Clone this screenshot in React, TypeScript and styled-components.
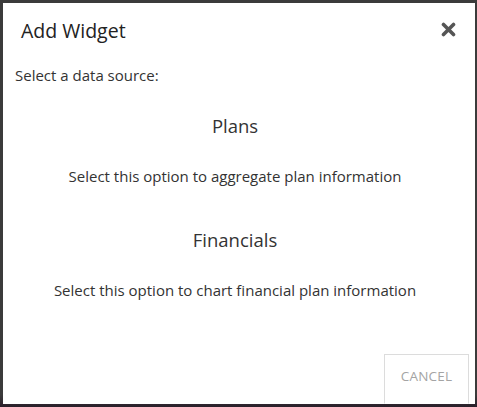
import React from 'react';
import styled, { createGlobalStyle } from 'styled-components';

const GlobalStyle = createGlobalStyle`
  html, body {
    margin: 0;
    padding: 0;
    background: #3b3b3b;
  }
  body {
    font-family: 'Open Sans', 'Noto Sans', sans-serif;
    color: #333;
  }
`;

const Backdrop = styled.div`
  width: 477px;
  height: 407px;
  padding: 3px 2px 3px 3px;
  box-sizing: border-box;
  background: linear-gradient(to bottom, #3b3b3b 0%, #3b3b3b 97%, #2a1f2a 100%);
`;

const Dialog = styled.div`
  width: 472px;
  height: 401px;
  background: #fff;
  display: flex;
  flex-direction: column;
  overflow: hidden;
`;

const Header = styled.div`
  display: flex;
  align-items: center;
  justify-content: space-between;
  padding: 12px 18px 0 18px;
  height: 30px;
`;

const Title = styled.h4`
  margin: 0;
  font-size: 19.5px;
  font-weight: 400;
  color: #222;
`;

const CloseButton = styled.button`
  border: 0;
  background: none;
  padding: 0;
  margin: 0 1px 2px 0;
  display: flex;
  cursor: pointer;
`;

const Body = styled.div`
  flex: 1;
  padding: 20px 20px 0 12px;
  font-size: 15px;
  line-height: 20px;
`;

const Prompt = styled.p`
  margin: 0 0 28px 0;
`;

const Option = styled.div`
  text-align: center;
  cursor: pointer;
  margin-bottom: 41px;
`;

const OptionTitle = styled.div`
  font-size: 18.5px;
  line-height: 25px;
  color: #333;
  margin-bottom: 28px;
`;

const OptionText = styled.div`
  font-size: 15px;
`;

const Footer = styled.div`
  display: flex;
  justify-content: flex-end;
  padding-right: 6px;
`;

const CancelButton = styled.button`
  width: 85px;
  height: 50px;
  padding: 0 0 6px 0;
  border: 1px solid #dcdcdc;
  border-bottom-color: transparent;
  background: #fff;
  color: #a4a4a4;
  font-family: inherit;
  font-size: 13.5px;
  letter-spacing: 0.2px;
  text-transform: uppercase;
  cursor: pointer;
`;

const CloseIcon = () => (
  <svg width="15" height="15" viewBox="0 0 15 15">
    <path
      d="M2.5 2.5 L12.5 12.5 M12.5 2.5 L2.5 12.5"
      stroke="#555"
      strokeWidth="3.6"
      strokeLinecap="round"
    />
  </svg>
);

const options = [
  { title: 'Plans', text: 'Select this option to aggregate plan information' },
  { title: 'Financials', text: 'Select this option to chart financial plan information' },
];

export default function App() {
  return (
    <>
      <GlobalStyle />
      <Backdrop>
        <Dialog>
          <Header>
            <Title>Add Widget</Title>
            <CloseButton aria-label="close">
              <CloseIcon />
            </CloseButton>
          </Header>
          <Body>
            <Prompt>Select a data source:</Prompt>
            {options.map((o) => (
              <Option key={o.title}>
                <OptionTitle>{o.title}</OptionTitle>
                <OptionText>{o.text}</OptionText>
              </Option>
            ))}
          </Body>
          <Footer>
            <CancelButton>Cancel</CancelButton>
          </Footer>
        </Dialog>
      </Backdrop>
    </>
  );
}
